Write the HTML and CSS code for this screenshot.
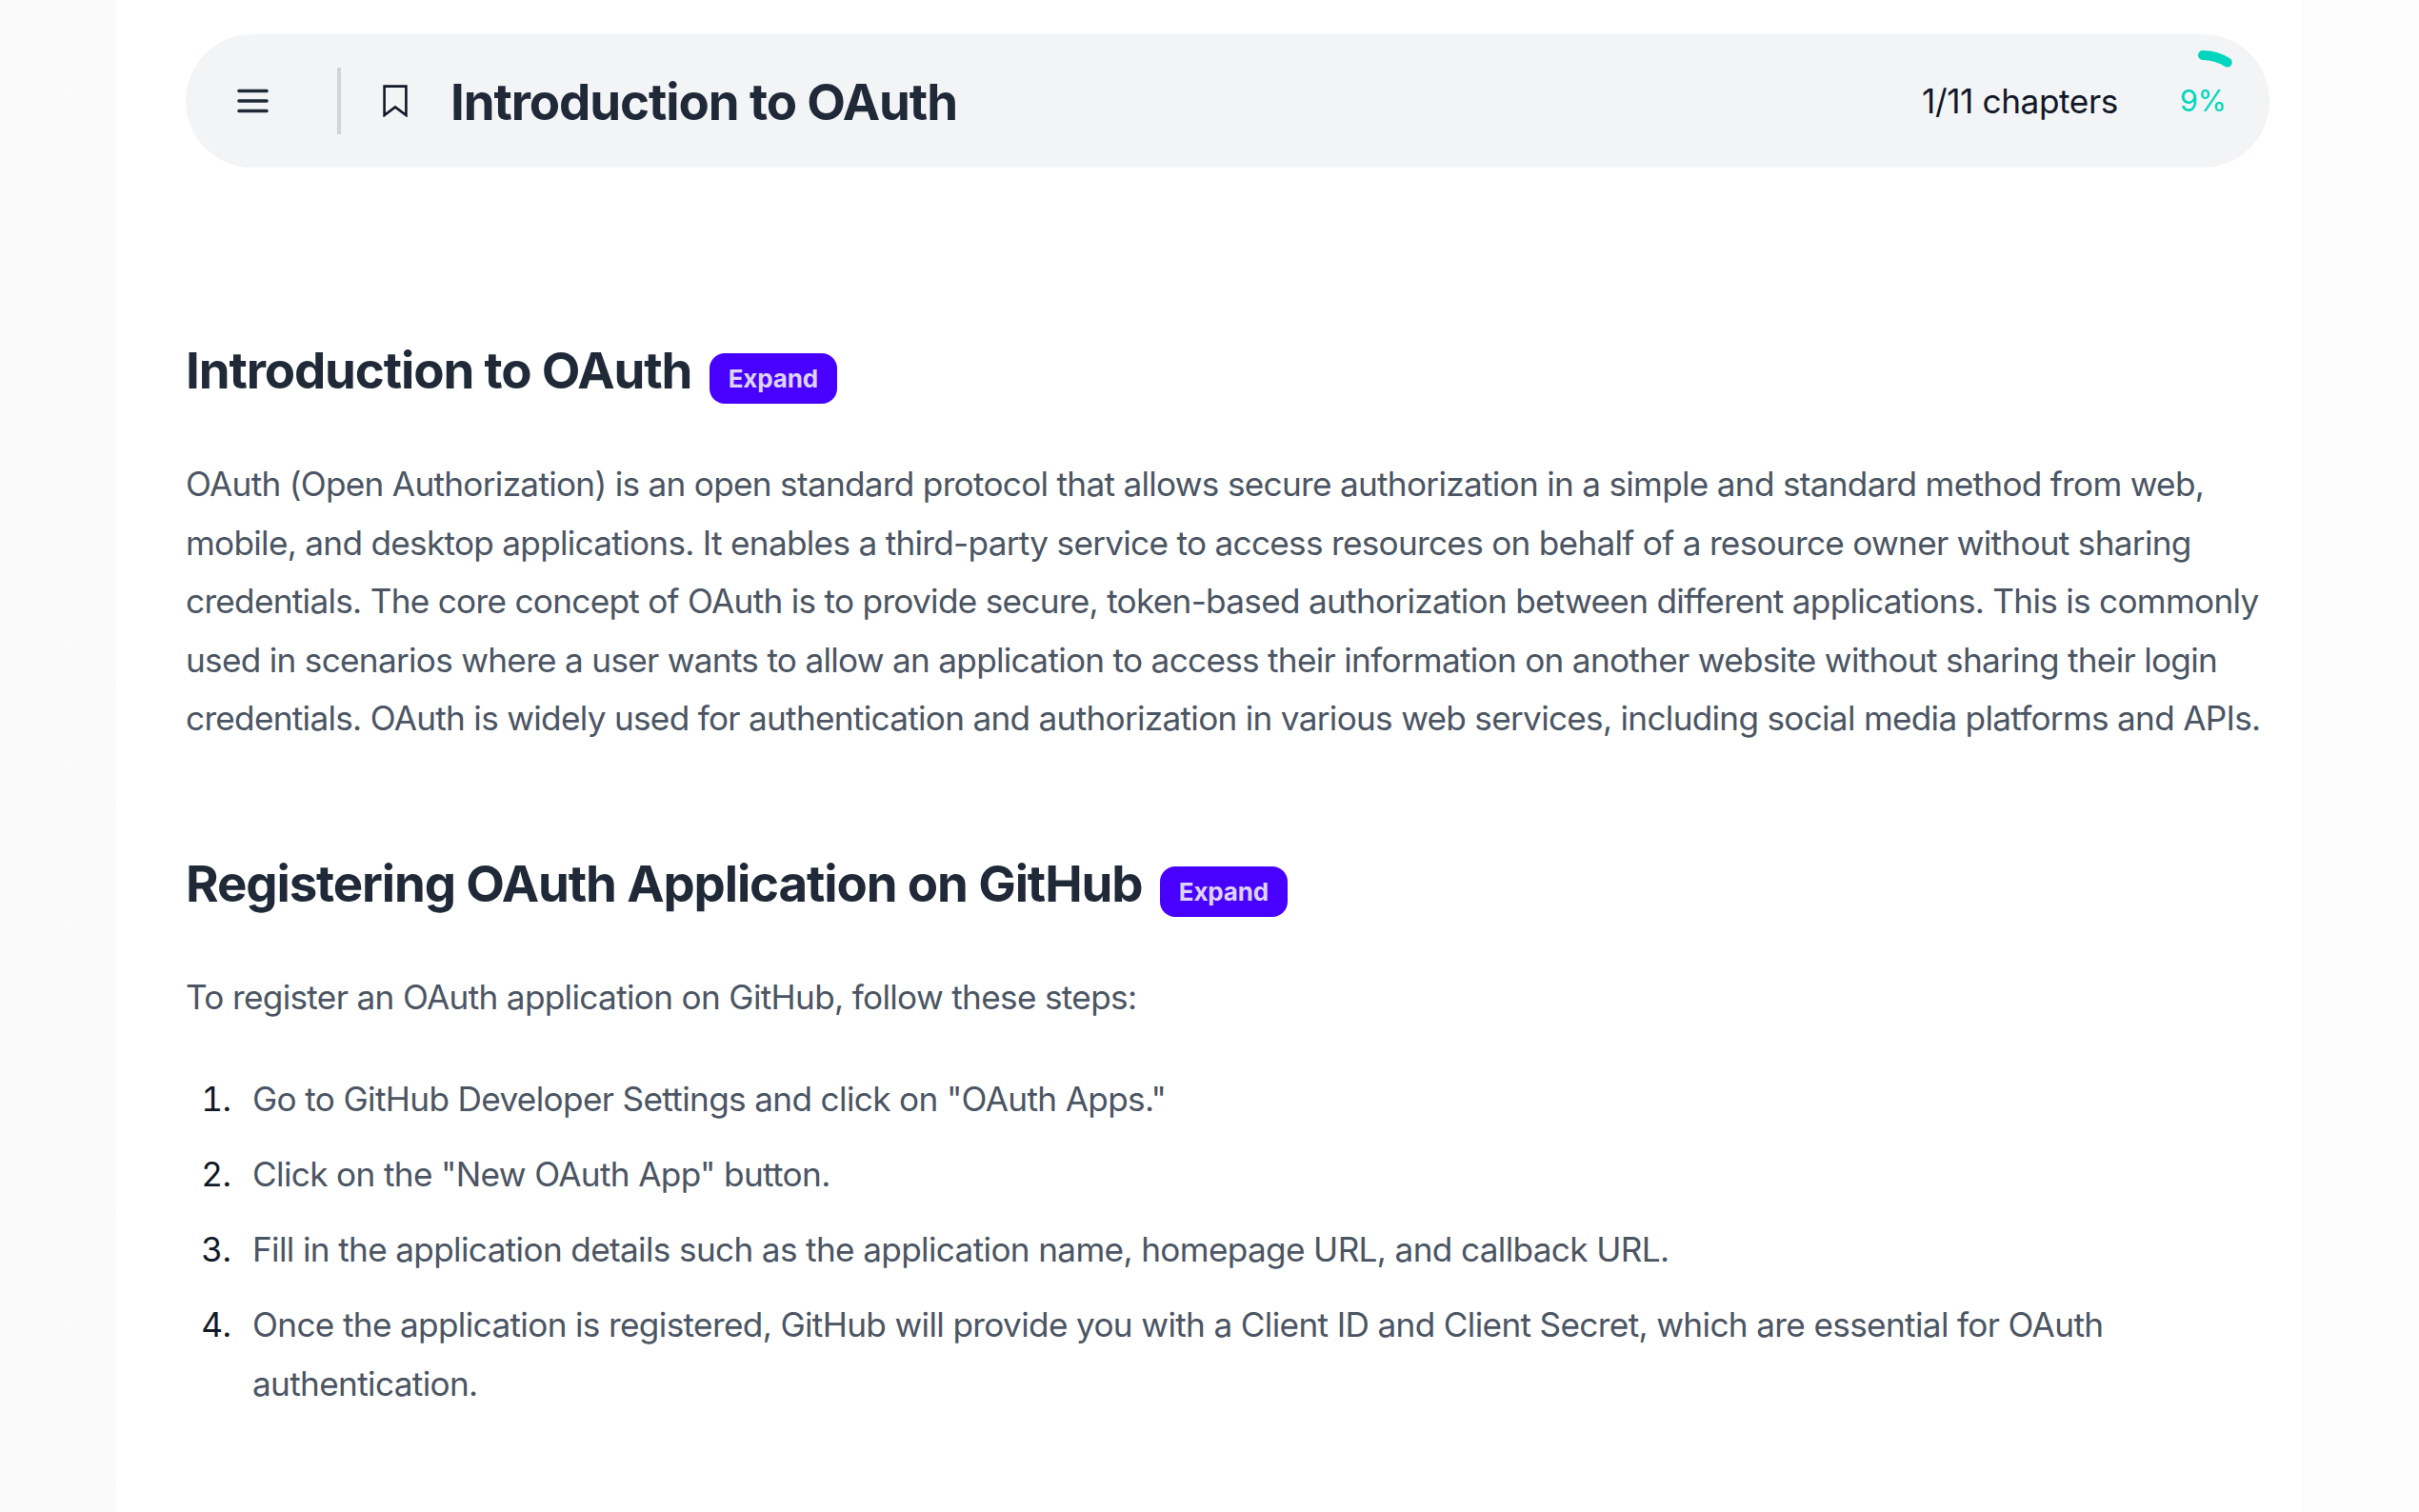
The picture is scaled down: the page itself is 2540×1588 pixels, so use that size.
FILE: index.html
```html
<!DOCTYPE html>
<html lang="en">
<head>
    <meta charset="UTF-8">
    <meta name="viewport" content="width=device-width, initial-scale=1.0">
    <title>Introduction to OAuth</title>
    <link rel="stylesheet" href="styles.css">
</head>
<body>

    <main class="container">
        <header class="chapter-bar">
            <button class="menu-button" aria-label="Menu">
                <svg class="menu-icon" viewBox="0 0 33 26" fill="none" stroke="#1f2937" stroke-width="3.6" stroke-linecap="round">
                    <path d="M2 2.5h29M2 13h29M2 23.5h29"/>
                </svg>
            </button>
            <span class="divider"></span>
            <svg class="bookmark-icon" viewBox="0 0 26 34" fill="none" stroke="#111827" stroke-width="2.6" stroke-linejoin="miter">
                <path d="M1.6 1.6h22.8v30.4L13 23.4 1.6 32z"/>
            </svg>
            <h1 class="chapter-title">Introduction to OAuth</h1>
            <span class="chapter-count">1/11 chapters</span>
            <div class="progress">
                <svg class="progress-ring" viewBox="0 0 112 112" fill="none">
                    <path d="M56 8A48 48 0 0 1 81.7 15.5" stroke="#00d6be" stroke-width="10" stroke-linecap="round"/>
                </svg>
                <span class="progress-label">9%</span>
            </div>
        </header>

        <article class="content">
            <h2>Introduction to OAuth <button class="expand-button">Expand</button></h2>
            <p class="summary">OAuth (Open Authorization) is an open standard protocol that allows secure authorization in a simple and standard method from web, mobile, and desktop applications. It enables a third-party service to access resources on behalf of a resource owner without sharing credentials. The core concept of OAuth is to provide secure, token-based authorization between different applications. This is commonly used in scenarios where a user wants to allow an application to access their information on another website without sharing their login credentials. OAuth is widely used for authentication and authorization in various web services, including social media platforms and APIs.</p>

            <h2>Registering OAuth Application on GitHub <button class="expand-button">Expand</button></h2>
            <p>To register an OAuth application on GitHub, follow these steps:</p>
            <ol>
                <li>Go to GitHub Developer Settings and click on "OAuth Apps."</li>
                <li>Click on the "New OAuth App" button.</li>
                <li>Fill in the application details such as the application name, homepage URL, and callback URL.</li>
                <li>Once the application is registered, GitHub will provide you with a Client ID and Client Secret, which are essential for OAuth authentication.</li>
            </ol>
        </article>
    </main>

</body>
</html>
```

FILE: styles.css
```css
/* base */
html, body {
    height: 100%;
}

body {
    font-family: 'Inter', 'Liberation Sans', sans-serif;
    background: linear-gradient(to right, #fafafa, #fcfcfc);
    margin: 0;
    padding: 0;
    overflow: hidden;
}

.container {
    width: 2296px;
    height: 100%;
    box-sizing: border-box;
    margin-left: 122px;
    padding: 36px 35px 0 73px;
    background-color: #fff;
}

/* top bar */
.chapter-bar {
    display: flex;
    align-items: center;
    height: 140px;
    box-sizing: border-box;
    padding: 0 14px 0 54px;
    background-color: #f3f4f6;
    border-radius: 70px;
}

.menu-button {
    display: flex;
    padding: 0;
    border: none;
    background: none;
}

.menu-icon {
    width: 33px;
    height: 26px;
}

.divider {
    width: 4px;
    height: 70px;
    margin-left: 72px;
    background-color: #d1d5db;
}

.bookmark-icon {
    width: 26px;
    height: 34px;
    margin-left: 44px;
}

.chapter-title {
    flex: 1;
    margin: 2px 0 0 45px;
    font-size: 52.8px;
    font-weight: 700;
    letter-spacing: -1.1px;
    color: #1f2937;
}

.chapter-count {
    margin-top: -1px;
    font-size: 35.2px;
    letter-spacing: -0.4px;
    color: #111827;
}

.progress {
    position: relative;
    display: flex;
    align-items: center;
    justify-content: center;
    width: 112px;
    height: 112px;
    margin-left: 33px;
}

.progress-ring {
    position: absolute;
    top: 0;
    left: 0;
    width: 112px;
    height: 112px;
}

.progress-label {
    margin-top: -1px;
    font-size: 31px;
    letter-spacing: -0.5px;
    color: #00d6be;
}

/* article */
.content {
    margin-top: 178px;
    font-size: 35.2px;
    line-height: 61.6px;
    letter-spacing: -0.68px;
    color: #4b5563;
}

.content h2 {
    margin: 0 0 54px;
    font-size: 52.8px;
    font-weight: 700;
    line-height: 70px;
    letter-spacing: -1.13px;
    color: #1f2937;
}

.content p {
    margin: 0 0 45px;
}

.content .summary {
    letter-spacing: -0.72px;
}

.content p + h2 {
    margin-top: 107px;
}

.expand-button {
    height: 53px;
    margin-left: 7px;
    padding: 0 20px;
    border: none;
    border-radius: 16px;
    background-color: #4800ff;
    color: #dcd3ff;
    font-family: inherit;
    font-size: 26px;
    font-weight: 700;
    letter-spacing: -0.15px;
    vertical-align: 1px;
}

.content ol {
    margin: 0;
    padding-left: 70px;
    letter-spacing: -0.66px;
}

.content li {
    margin-bottom: 17.6px;
}

.content li::marker {
    content: counter(list-item) ".\2002\2009";
    color: #111827;
}
```
